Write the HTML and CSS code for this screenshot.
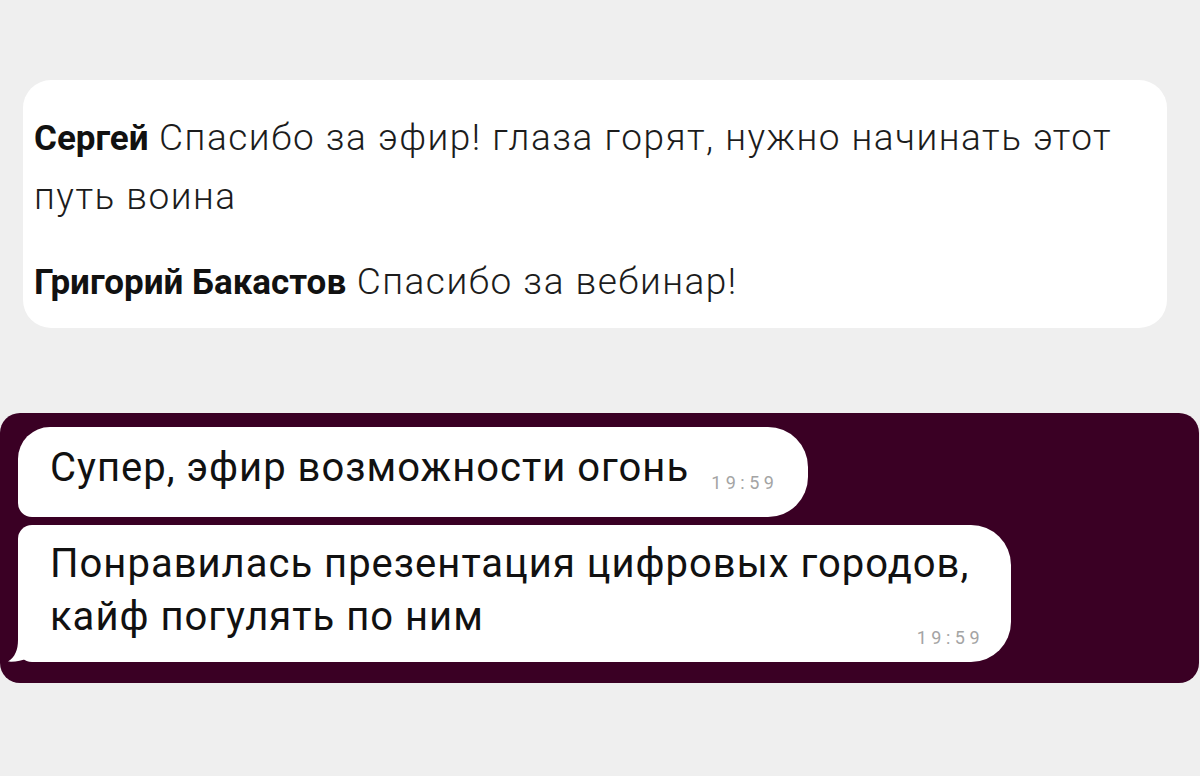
FILE: index.html
```html
<!DOCTYPE html>
<html lang="ru">
<head>
<meta charset="utf-8">
<title>Чат</title>
<link rel="stylesheet" href="styles.css">
</head>
<body>
<section class="comments">
  <p class="comment"><b class="author">Сергей</b> Спасибо за эфир! глаза горят, нужно начинать этот путь воина</p>
  <p class="comment"><b class="author">Григорий Бакастов</b> Спасибо за вебинар!</p>
</section>
<section class="chat">
  <div class="bubble bubble-first">
    <span class="msg">Супер, эфир возможности огонь</span><span class="time inline">19:59</span>
  </div>
  <div class="bubble bubble-last">
    <p class="msg">Понравилась презентация цифровых городов, кайф погулять по ним</p>
    <div class="time block">19:59</div>
    <svg class="tail" width="40" height="26" viewBox="0 0 40 26"><path d="M10 4 C10 14 7 21 0 25.6 C7 26 14 25 19 22 L14 8 Z" fill="#fff"/></svg>
  </div>
</section>
</body>
</html>
```
FILE: styles.css
```css
html, body { margin: 0; padding: 0; }
body {
  background: #efefef;
  width: 1200px;
  height: 776px;
  overflow: hidden;
  font-family: Roboto, "Liberation Sans", sans-serif;
  color: #141414;
}
.comments {
  margin: 80px 0 0 23px;
  width: 1144px;
  height: 248px;
  box-sizing: border-box;
  background: #fff;
  border-radius: 28px;
  padding: 29px 30px 0 11px;
}
.comment {
  margin: 0 0 27px;
  font-family: Roboto, "Liberation Sans", sans-serif;
  font-size: 37px;
  line-height: 58px;
  letter-spacing: 1.5px;
  font-weight: 300;
  color: #1c1c1c;
}
.author {
  font-size: 35px;
  font-weight: 700;
  letter-spacing: 0;
  color: #111;
}
.chat {
  margin-top: 85px;
  width: 1199px;
  height: 270px;
  box-sizing: border-box;
  background: #3a0024;
  border-radius: 20px;
  padding: 14px 0 0 18px;
  display: flex;
  flex-direction: column;
  align-items: flex-start;
  gap: 8px;
}
.bubble {
  position: relative;
  background: #fff;
  box-sizing: border-box;
  color: #111;
}
.bubble-first {
  height: 90px;
  padding: 14px 30px 0 32px;
  border-radius: 32px 40px 40px 14px;
  font-size: 40px;
  line-height: 53px;
  white-space: nowrap;
}
.bubble-last {
  max-width: 993px;
  height: 137px;
  padding: 12px 31px 0 32px;
  border-radius: 14px 40px 40px 14px;
}
.msg {
  margin: 0;
  font-size: 40px;
  line-height: 53px;
  letter-spacing: 1px;
}
.time {
  color: #a4a4a4;
  font-size: 18px;
  letter-spacing: 4.5px;
}
.time.inline {
  margin-left: 22px;
  vertical-align: -8px;
  line-height: 20px;
}
.time.block {
  text-align: right;
  margin-top: -15px;
  margin-right: -4px;
  line-height: 20px;
}
.tail {
  position: absolute;
  left: -10px;
  bottom: 0;
}
```
